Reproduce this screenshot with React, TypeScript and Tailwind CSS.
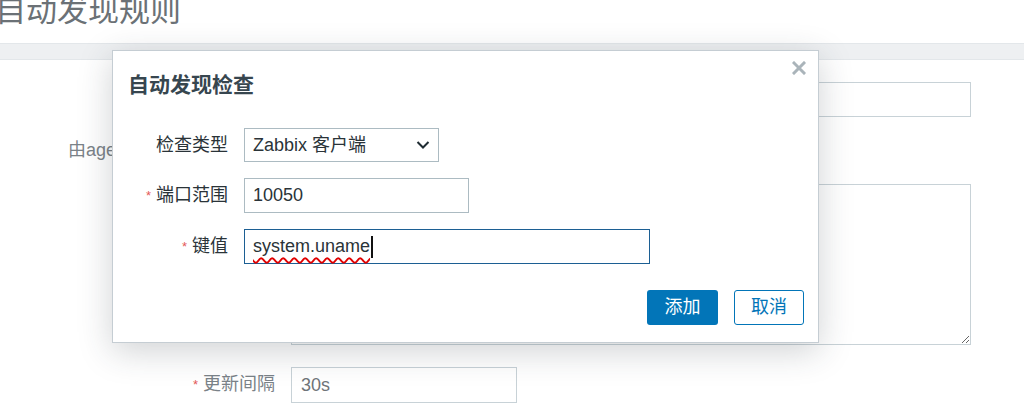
import { useState } from 'react';

const FONT = '"Liberation Sans", "Noto Sans CJK SC", sans-serif';

function Req() {
  return <span className="mr-[5px] text-[13px] text-[#e45959] align-top">*</span>;
}

function PageRow({
  label,
  required,
  children,
  className = '',
}: {
  label?: string;
  required?: boolean;
  children: React.ReactNode;
  className?: string;
}) {
  return (
    <div className={`flex items-start ${className}`}>
      <div className="flex h-[35px] w-[275px] shrink-0 items-center justify-end whitespace-nowrap text-[18px] text-[#7a8288]">
        {required && <Req />}
        {label}
      </div>
      <div className="ml-4">{children}</div>
    </div>
  );
}

function DiscoveryCheckDialog() {
  const [key] = useState('system.uname');

  return (
    <div className="absolute left-[112px] top-[50px] h-[293px] w-[707px] border border-[#c5cdd3] bg-white shadow-[0_8px_32px_rgba(40,50,60,0.22)]">
      <button className="absolute right-[11px] top-[9px] p-[1px]" aria-label="close">
        <svg width="14" height="14" viewBox="0 0 14 14">
          <path d="M2 2 L12 12 M12 2 L2 12" stroke="#aab4ba" strokeWidth="3" strokeLinecap="square" />
        </svg>
      </button>

      <h2 className="pl-[15px] pt-[20px] text-[21px] font-bold leading-[28px] text-[#37464f]">自动发现检查</h2>

      <div className="mt-[29px] flex flex-col gap-4 text-[18px] text-[#2a3338]">
        <div className="flex items-center">
          <label className="w-[115px] text-right">检查类型</label>
          <div className="ml-4 flex h-[34px] w-[195px] items-center justify-between border border-[#acbbc2] pl-[8px] pr-[8px]">
            <span>Zabbix 客户端</span>
            <svg width="14" height="10" viewBox="0 0 14 10">
              <path d="M1.5 2 L7 7.5 L12.5 2" fill="none" stroke="#1f2c33" strokeWidth="2" />
            </svg>
          </div>
        </div>

        <div className="flex items-center">
          <label className="flex w-[115px] items-center justify-end">
            <Req />
            端口范围
          </label>
          <div className="ml-4 flex h-[35px] w-[225px] items-center border border-[#acbbc2] px-[8px]">10050</div>
        </div>

        <div className="flex items-center">
          <label className="flex w-[115px] items-center justify-end">
            <Req />
            键值
          </label>
          <div className="ml-4 flex h-[35px] w-[406px] items-center border border-[#1c5f93] px-[8px]">
            <span className="underline decoration-[#e00000] decoration-wavy decoration-2 underline-offset-[5px]">{key}</span>
            <span className="ml-[1px] inline-block h-[22px] w-[2px] bg-[#111]" />
          </div>
        </div>
      </div>

      <div className="mt-[26px] flex justify-end gap-4 pr-[14px] text-[18px]">
        <button className="h-[35px] w-[71px] rounded-[3px] bg-[#0275b8] text-white">添加</button>
        <button className="h-[35px] w-[70px] rounded-[3px] border border-[#0275b8] bg-white text-[#0275b8]">取消</button>
      </div>
    </div>
  );
}

export default function App() {
  return (
    <div className="relative h-[405px] w-[1024px] overflow-hidden bg-white" style={{ fontFamily: FONT }}>
      <div className="h-[43px] overflow-hidden">
        <h1 className="ml-[-5px] mt-[-5px] text-[31px] leading-[31px] text-[#6b7176]">自动发现规则</h1>
      </div>
      <div className="h-[17px] border-y border-[#e3e7ea] bg-[#eef0f2]" />

      <div className="flex flex-col">
        <PageRow label="名称" className="mt-[22px]">
          <div className="h-[35px] w-[680px] border border-[#c8d2d7]" />
        </PageRow>
        <PageRow label="由agent代理程序自动发现" className="mt-4">
          <div className="h-[35px] w-[220px] border border-[#c8d2d7]" />
        </PageRow>
        <PageRow label="IP范围" required className="mt-4">
          <textarea
            readOnly
            className="block h-[161px] w-[680px] border border-[#c8d2d7] outline-none"
            defaultValue=""
          />
        </PageRow>
        <PageRow label="更新间隔" required className="mt-[22px]">
          <div className="flex h-[36px] w-[226px] items-center border border-[#c8d2d7] px-[9px] text-[18px] text-[#6f7479]">
            30s
          </div>
        </PageRow>
      </div>

      <DiscoveryCheckDialog />
    </div>
  );
}
